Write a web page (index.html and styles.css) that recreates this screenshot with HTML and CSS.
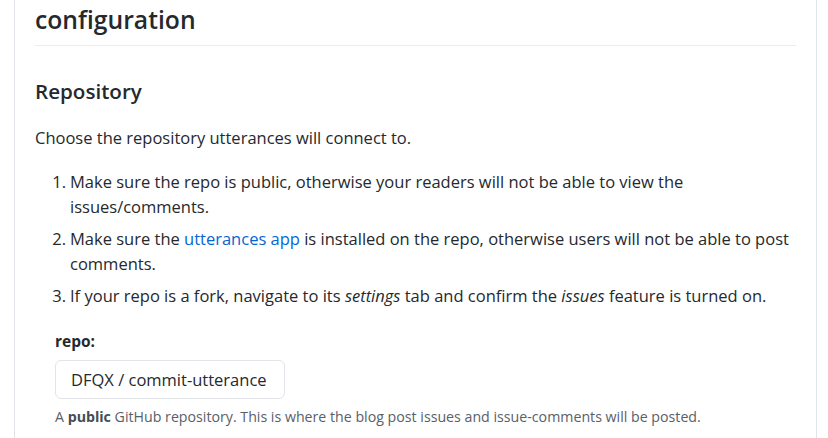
FILE: index.html
```html
<!DOCTYPE html>
<html lang="en">
<head>
    <meta charset="UTF-8">
    <meta name="viewport" content="width=device-width, initial-scale=1.0">
    <title>utterances configuration</title>
    <link rel="stylesheet" href="styles.css">
</head>
<body>

<div class="page">
    <h2 class="section-title">configuration</h2>

    <h3 class="sub-title">Repository</h3>
    <p class="intro">Choose the repository utterances will connect to.</p>

    <ol class="steps">
        <li><span class="step-text">Make sure the repo is public, otherwise your readers will not be able to view the issues/comments.</span></li>
        <li><span class="step-text">Make sure the <a href="#">utterances app</a> is installed on the repo, otherwise users will not be able to post comments.</span></li>
        <li><span class="step-text">If your repo is a fork, navigate to its <em>settings</em> tab and confirm the <em>issues</em> feature is turned on.</span></li>
    </ol>

    <!-- Campo del repositorio -->
    <fieldset class="repo-field">
        <label class="repo-label" for="repo">repo:</label>
        <input class="repo-input" id="repo" type="text" value="DFQX / commit-utterance">
        <p class="note">A <strong>public</strong> GitHub repository. This is where the blog post issues and issue-comments will be posted.</p>
    </fieldset>
</div>

</body>
</html>
```

FILE: styles.css
```css
* {
    margin: 0;
    padding: 0;
    box-sizing: border-box;
}

body {
    font-family: 'Open Sans', 'Noto Sans', sans-serif;
    font-size: 16.5px;
    color: #24292e;
    background: #fff;
    overflow: hidden;
    height: 438px;
}

.page {
    margin: 0 11px 0 14px;
    padding: 5px 20px 0 20px;
    border-left: 1px solid #e1e4e8;
    border-right: 1px solid #e1e4e8;
    height: 438px;
}

.section-title {
    font-size: 24.7px;
    font-weight: 600;
    line-height: 30px;
    padding-bottom: 10px;
    border-bottom: 1px solid #eaecef;
}

.sub-title {
    font-size: 20.6px;
    font-weight: 600;
    line-height: 26px;
    margin-top: 32px;
}

.intro {
    line-height: 25.6px;
    margin-top: 21px;
}

.steps {
    margin-top: 18px;
    list-style: none;
    counter-reset: step;
    line-height: 25.6px;
}

.steps li {
    display: flex;
    margin-top: 6px;
    counter-increment: step;
}

/* numero del paso, 35px en total */
.steps li::before {
    content: counter(step) ".";
    flex: none;
    width: 31px;
    padding-right: 4px;
    text-align: right;
}

.step-text {
    flex: 1;
}

.steps a {
    color: #0366d6;
    text-decoration: none;
}

.repo-field {
    border: none;
    margin: 22px 0 0 20px;
}

.repo-label {
    display: block;
    font-weight: 700;
    font-size: 15.5px;
    line-height: 20px;
    margin-bottom: 9px;
}

.repo-input {
    display: block;
    width: 230px;
    height: 39px;
    padding: 0 15px;
    font-family: inherit;
    font-size: 16.5px;
    color: #24292e;
    border: 1px solid #e1e4e8;
    border-radius: 6px;
    background: #fff;
}

.note {
    margin-top: 8px;
    font-size: 14.2px;
    line-height: 20px;
    color: #586069;
}

.note strong {
    color: #444d56;
}
```
